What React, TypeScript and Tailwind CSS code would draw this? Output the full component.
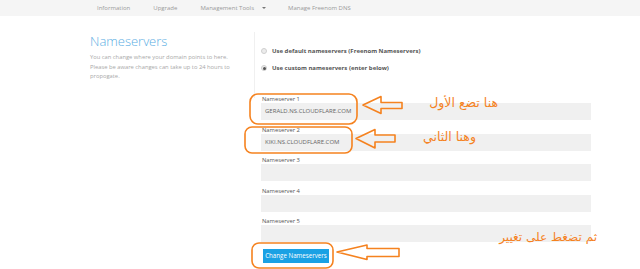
import React from 'react';

const NAV = ['Information', 'Upgrade', 'Management Tools', 'Manage Freenom DNS'];

const SERVERS = [
  { label: 'Nameserver 1', value: 'GERALD.NS.CLOUDFLARE.COM' },
  { label: 'Nameserver 2', value: 'KIKI.NS.CLOUDFLARE.COM' },
  { label: 'Nameserver 3', value: '' },
  { label: 'Nameserver 4', value: '' },
  { label: 'Nameserver 5', value: '' },
];

const ORANGE = '#f5821f';

function Radio({ checked }: { checked?: boolean }) {
  return (
    <span className="flex h-[6px] w-[6px] items-center justify-center rounded-full border border-[#cfcfcf] bg-[#ececec]">
      {checked && <span className="h-[3px] w-[3px] rounded-full bg-[#555]" />}
    </span>
  );
}

// hand-drawn annotations laid over the form
function Annotations() {
  return (
    <>
      <svg className="pointer-events-none absolute inset-0" width="640" height="269" viewBox="0 0 640 269" fill="none" stroke={ORANGE} strokeWidth="1.6" strokeLinejoin="round">
        <rect x="250" y="94" width="107" height="30" rx="8" />
        <rect x="245" y="127" width="107" height="26" rx="7" />
        <rect x="252" y="243" width="81" height="25" rx="7" />
        <path d="M363 105 L381 96.5 L381 102.5 L402 102.5 L402 108.5 L381 108.5 L381 113.5 Z" />
        <path d="M356 138.5 L375 129.5 L375 135 L395 135 L395 142 L375 142 L375 148 Z" />
        <path d="M337 252 L367 245 L367 248.5 L399 248.5 L399 256.5 L367 256.5 L367 259.5 Z" />
      </svg>
      <div dir="rtl" className="pointer-events-none absolute left-[418px] top-[94px] w-[80px] text-right font-['DejaVu_Sans',sans-serif] text-[12.5px] leading-[18px] text-[#f5821f]">هنا تضع الأول</div>
      <div dir="rtl" className="pointer-events-none absolute left-[416px] top-[128px] w-[60px] text-right font-['DejaVu_Sans',sans-serif] text-[12.5px] leading-[18px] text-[#f5821f]">وهنا الثاني</div>
      <div dir="rtl" className="pointer-events-none absolute left-[486px] top-[228px] w-[111px] text-right font-['DejaVu_Sans',sans-serif] text-[12px] leading-[18px] text-[#f5821f]">ثم تضغط على تغيير</div>
    </>
  );
}

export default function App() {
  return (
    <div className="relative h-[269px] w-[640px] overflow-hidden bg-white font-['Open_Sans',sans-serif]">
      {/* Top nav */}
      <nav className="flex h-[16px] items-center bg-[#f5f5f5] pl-[97px] text-[6px] text-[#9a9a9a]">
        <span>{NAV[0]}</span>
        <span className="ml-[23px]">{NAV[1]}</span>
        <span className="ml-[23px] flex items-center">
          {NAV[2]}
          <span className="ml-[8px] h-0 w-0 border-x-[2px] border-t-[2.5px] border-x-transparent border-t-[#777]" />
        </span>
        <span className="ml-[22px]">{NAV[3]}</span>
      </nav>

      <div className="flex pl-[90px] pt-[16px]">
        {/* Left column */}
        <div className="h-[66px] w-[165px] border-r border-[#f0f0f0] pt-[1px] pr-[14px]">
          <h1 className="text-[13px] font-light leading-[16px] text-[#5aaee3]">Nameservers</h1>
          <p className="mt-[4px] text-[5.8px] leading-[9.5px] text-[#a8a8a8]">
            You can change where your domain points to here. Please be aware changes can take up to 24 hours to propogate.
          </p>
        </div>

        {/* Right column */}
        <div className="flex flex-col pt-[14px] pl-[6px]">
          <div className="flex flex-col gap-[7px] text-[6px] font-bold leading-[10px] text-[#555]">
            <label className="flex items-center gap-[5px]">
              <Radio />
              Use default nameservers (Freenom Nameservers)
            </label>
            <label className="flex items-center gap-[5px]">
              <Radio checked />
              Use custom nameservers (enter below)
            </label>
          </div>

          <div className="mt-[23px] flex flex-col gap-[6.5px]">
            {SERVERS.map((s) => (
              <div key={s.label} className="flex flex-col">
                <span className="pl-[1px] text-[5.8px] leading-[7px] text-[#555]">{s.label}</span>
                <div className="flex h-[17px] w-[330px] items-center bg-[#f0f0f0] pl-[4px] text-[6px] text-[#666]">{s.value}</div>
              </div>
            ))}
          </div>

          <div className="mt-[7px] flex pl-[2px]">
            <button className="flex h-[14px] w-[66px] items-center justify-center bg-[#1aa1e4] text-[6.2px] leading-[14px] text-white">Change Nameservers</button>
          </div>
        </div>
      </div>

      <Annotations />
    </div>
  );
}
